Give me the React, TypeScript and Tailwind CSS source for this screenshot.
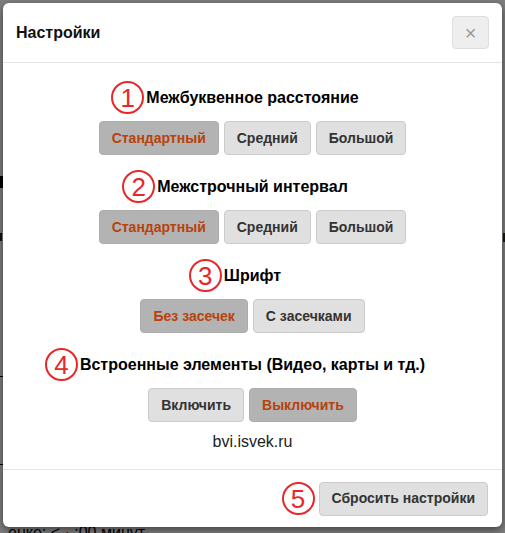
import React from "react";

type Option = { label: string; active?: boolean };

type Section = { num: number; title: string; options: Option[] };

const sections: Section[] = [
  {
    num: 1,
    title: "Межбуквенное расстояние",
    options: [{ label: "Стандартный", active: true }, { label: "Средний" }, { label: "Большой" }],
  },
  {
    num: 2,
    title: "Межстрочный интервал",
    options: [{ label: "Стандартный", active: true }, { label: "Средний" }, { label: "Большой" }],
  },
  {
    num: 3,
    title: "Шрифт",
    options: [{ label: "Без засечек", active: true }, { label: "С засечками" }],
  },
  {
    num: 4,
    title: "Встроенные элементы (Видео, карты и тд.)",
    options: [{ label: "Включить" }, { label: "Выключить", active: true }],
  },
];

function Step({ n }: { n: number }) {
  return (
    <span className="flex h-[33px] w-[33px] shrink-0 items-center justify-center rounded-full border-2 border-[#e8272b] text-[26px] font-light leading-none text-[#e8272b]">
      {n}
    </span>
  );
}

function OptionButton({ label, active }: Option) {
  return (
    <button
      type="button"
      className={`h-[34px] rounded-[4px] border px-[12px] text-[14px] font-bold ${
        active
          ? "border-[#adadad] bg-[#b3b3b3] text-[#b8420c]"
          : "border-[#cbcbcb] bg-[#e0e0e0] text-[#333333]"
      }`}
    >
      {label}
    </button>
  );
}

export default function App() {
  return (
    <div
      className="relative h-[533px] w-[505px] overflow-hidden bg-white"
      style={{ fontFamily: '"Liberation Sans", Arial, sans-serif' }}
    >
      {/* page behind the overlay */}
      <div className="absolute inset-0">
        <div className="absolute left-0 top-[176px] h-[12px] w-[3px] bg-black" />
        <div className="absolute left-0 top-[233px] h-[8px] w-[2px] bg-[#223]" />
        <div className="absolute right-0 top-[233px] h-[9px] w-[2px] bg-[#332]" />
        <div className="absolute left-0 top-[376px] h-px w-[10px] bg-black" />
        <div className="absolute left-0 top-[464px] h-px w-[10px] bg-black" />
        <div className="absolute left-[8px] top-[521px] text-[16px] text-black">енке: &lt; · :00 минут</div>
      </div>
      <div className="absolute inset-0 bg-black/50" />

      {/* modal */}
      <div className="absolute left-[3px] top-[3px] flex h-[524px] w-[499px] flex-col rounded-[6px] bg-white shadow-[0_3px_9px_rgba(0,0,0,0.5)]">
        <div className="flex h-[60px] items-center justify-between border-b border-[#e5e5e5] pl-[13px] pr-[13px]">
          <h4 className="text-[16px] font-bold text-[#111]">Настройки</h4>
          <button
            type="button"
            className="flex h-[33px] w-[37px] items-center justify-center rounded-[4px] border border-[#dedede] bg-[#eeeeee] text-[20px] leading-none text-[#999]"
          >
            ×
          </button>
        </div>

        <div className="flex flex-1 flex-col items-center pt-[18px]">
          {sections.map((s, i) => (
            <div key={s.num} className={`flex flex-col items-center ${i > 0 ? "mt-[15px]" : ""}`}>
              <div className="relative flex h-[33px] items-center">
                <span className="absolute right-full mr-[2px]">
                  <Step n={s.num} />
                </span>
                <span className="text-[16px] font-bold text-black">{s.title}</span>
              </div>
              <div className="mt-[7px] flex gap-[5px]">
                {s.options.map((o) => (
                  <OptionButton key={o.label} {...o} />
                ))}
              </div>
            </div>
          ))}
          <p className="mt-[9px] text-[16px] leading-[22px] text-[#222]">bvi.isvek.ru</p>
        </div>

        <div className="flex h-[58px] items-center justify-end gap-[4px] border-t border-[#e5e5e5] pr-[14px]">
          <Step n={5} />
          <OptionButton label="Сбросить настройки" />
        </div>
      </div>
    </div>
  );
}
